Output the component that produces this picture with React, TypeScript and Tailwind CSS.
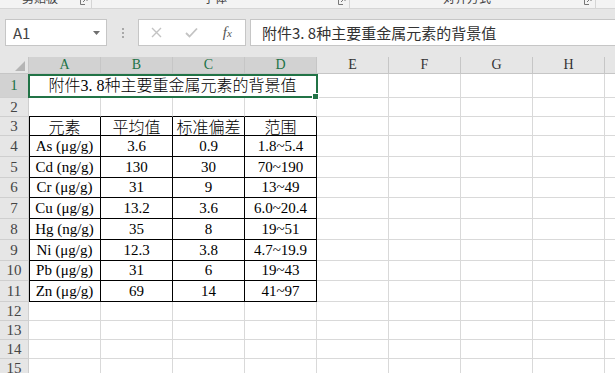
import React from "react";

const COLS = "grid grid-cols-[29px_repeat(8,72px)_1fr]";
const SERIF = "font-['Liberation_Serif','Noto_Sans_CJK_SC',serif]";
const CJK = "font-['Noto_Sans_CJK_SC','Noto_Sans',sans-serif]";

const table: string[][] = [
  ["元素", "平均值", "标准偏差", "范围"],
  ["As (μg/g)", "3.6", "0.9", "1.8~5.4"],
  ["Cd (ng/g)", "130", "30", "70~190"],
  ["Cr (μg/g)", "31", "9", "13~49"],
  ["Cu (μg/g)", "13.2", "3.6", "6.0~20.4"],
  ["Hg (ng/g)", "35", "8", "19~51"],
  ["Ni (μg/g)", "12.3", "3.8", "4.7~19.9"],
  ["Pb (μg/g)", "31", "6", "19~43"],
  ["Zn (μg/g)", "69", "14", "41~97"],
];

const tableHeights = [
  "h-[19px]",
  "h-[21px]",
  "h-[21px]",
  "h-[20px]",
  "h-[21px]",
  "h-[21px]",
  "h-[21px]",
  "h-[20px]",
  "h-[21px]",
];

function RowHead({ n, sel }: { n: number; sel?: boolean }) {
  return (
    <div
      className={`flex items-center justify-center border-r border-b border-[#cfcfcf] text-[15px] leading-none ${SERIF} ${
        sel ? "bg-[#d2d2d2] text-[#217346]" : "bg-[#e6e6e6] text-[#444]"
      }`}
    >
      {n}
    </div>
  );
}

function EmptyTail() {
  return (
    <>
      <div className="border-r border-b border-[#d9d9d9]" />
      <div className="border-r border-b border-[#d9d9d9]" />
      <div className="border-r border-b border-[#d9d9d9]" />
      <div className="border-r border-b border-[#d9d9d9]" />
      <div className="border-b border-[#d9d9d9]" />
    </>
  );
}

function Launcher() {
  return (
    <svg width="8" height="8" viewBox="0 0 8 8" className="-mt-[3px] shrink-0">
      <path d="M0.5 3V7.5H5" fill="none" stroke="#777" strokeWidth="1" />
      <path d="M3 5L7 1M4 1H7V4" fill="none" stroke="#777" strokeWidth="1" />
    </svg>
  );
}

function RibbonGroup({ w, label }: { w: string; label: string }) {
  return (
    <div className={`${w} h-full flex items-start border-r border-[#d5d5d5] pr-[3px] overflow-hidden`}>
      <div className={`flex-1 text-center text-[12px] leading-[12px] text-[#444] -mt-[8px] ${CJK}`}>{label}</div>
      <Launcher />
    </div>
  );
}

export default function App() {
  return (
    <div className="w-[615px] h-[373px] overflow-hidden bg-white flex flex-col">
      {/* ribbon strip */}
      <div className="h-[9px] shrink-0 bg-[#f3f3f3] border-b border-[#d5d5d5] flex overflow-hidden">
        <RibbonGroup w="w-[92px]" label="剪贴板" />
        <RibbonGroup w="w-[258px]" label="字体" />
        <RibbonGroup w="w-[246px]" label="对齐方式" />
      </div>

      {/* formula bar */}
      <div className="h-[48px] shrink-0 bg-[#e6e6e6] flex items-start pt-[10px] pl-[5px]">
        <div className="w-[102px] h-[27px] bg-white border border-[#c6c6c6] flex items-center justify-between pl-[7px] pr-[6px]">
          <span className={`text-[15px] leading-none text-[#444] ${CJK}`}>A1</span>
          <svg width="7" height="4" viewBox="0 0 7 4">
            <path d="M0 0H7L3.5 4Z" fill="#6f6f6f" />
          </svg>
        </div>
        <div className="w-[31px] h-[27px] flex flex-col items-center justify-center gap-[2px]">
          <div className="w-[2px] h-[2px] bg-[#a8a8a8]" />
          <div className="w-[2px] h-[2px] bg-[#a8a8a8]" />
          <div className="w-[2px] h-[2px] bg-[#a8a8a8]" />
        </div>
        <div className="w-[108px] h-[27px] bg-white border border-[#c6c6c6] flex items-center">
          <div className="w-[36px] flex justify-center">
            <svg width="11" height="11" viewBox="0 0 11 11">
              <path d="M1 1L10 10M10 1L1 10" stroke="#c3c3c3" strokeWidth="1.4" />
            </svg>
          </div>
          <div className="w-[36px] flex justify-center">
            <svg width="13" height="11" viewBox="0 0 13 11">
              <path d="M1 6L4.5 9.5L12 1.5" fill="none" stroke="#c3c3c3" strokeWidth="1.8" />
            </svg>
          </div>
          <div className="w-[36px] flex justify-center">
            <span className="italic font-['Liberation_Serif',serif] text-[15px] leading-none text-[#555]">
              f<span className="text-[11px]">x</span>
            </span>
          </div>
        </div>
        <div className="ml-[4px] flex-1 h-[27px] bg-white border border-r-0 border-[#c6c6c6] flex items-center pl-[11px]">
          <span className={`text-[15px] leading-none text-[#333] ${CJK}`}>附件3. 8种主要重金属元素的背景值</span>
        </div>
      </div>

      {/* sheet */}
      <div className="relative flex-1 overflow-hidden">
        {/* column headers */}
        <div className={`${COLS} h-[17px]`}>
          <div className="relative bg-[#e6e6e6] border-r border-b border-[#c6c6c6]">
            <svg width="10" height="10" viewBox="0 0 10 10" className="absolute right-[3px] bottom-[2px]">
              <path d="M10 0V10H0Z" fill="#b5b5b5" />
            </svg>
          </div>
          {["A", "B", "C", "D"].map((c) => (
            <div
              key={c}
              className={`flex items-center justify-center bg-[#d2d2d2] text-[#217346] border-r border-b border-[#c6c6c6] text-[14px] leading-none ${SERIF}`}
            >
              {c}
            </div>
          ))}
          {["E", "F", "G", "H"].map((c) => (
            <div
              key={c}
              className={`flex items-center justify-center bg-[#e6e6e6] text-[#333] border-r border-b border-[#c6c6c6] text-[14px] leading-none ${SERIF}`}
            >
              {c}
            </div>
          ))}
          <div className="bg-[#e6e6e6] border-b border-[#c6c6c6]" />
        </div>

        {/* row 1 */}
        <div className={`${COLS} h-[24px]`}>
          <RowHead n={1} sel />
          <div
            className={`col-span-4 flex items-center justify-center border-r border-b border-[#d9d9d9] text-[16px] leading-none font-light text-black ${SERIF}`}
          >
            附件3. 8种主要重金属元素的背景值
          </div>
          <EmptyTail />
        </div>

        {/* row 2 */}
        <div className={`${COLS} h-[19px]`}>
          <RowHead n={2} />
          <div className="border-r border-b border-[#d9d9d9] border-b-black" />
          <div className="border-r border-b border-[#d9d9d9] border-b-black" />
          <div className="border-r border-b border-[#d9d9d9] border-b-black" />
          <div className="border-r border-b border-[#d9d9d9] border-b-black" />
          <EmptyTail />
        </div>

        {/* table rows 3-11 */}
        {table.map((row, i) => (
          <div key={i} className={`${COLS} ${tableHeights[i]}`}>
            <RowHead n={i + 3} />
            {row.map((v, j) => (
              <div
                key={j}
                className={`flex items-center justify-center border-r border-b border-black text-black leading-none ${
                  i === 0 ? `text-[16px] font-light ${CJK}` : `text-[15px] ${SERIF}`
                } ${j === 0 ? "shadow-[inset_1px_0_0_#000]" : ""}`}
              >
                {v}
              </div>
            ))}
            <EmptyTail />
          </div>
        ))}

        {/* rows 12-15 */}
        {[12, 13, 14, 15].map((n) => (
          <div key={n} className={`${COLS} h-[19px]`}>
            <RowHead n={n} />
            <div className="border-r border-b border-[#d9d9d9]" />
            <div className="border-r border-b border-[#d9d9d9]" />
            <div className="border-r border-b border-[#d9d9d9]" />
            <div className="border-r border-b border-[#d9d9d9]" />
            <EmptyTail />
          </div>
        ))}

        {/* selection */}
        <div className="absolute left-[28px] top-[17px] w-[290px] h-[24px] border-2 border-[#217346]" />
        <div className="absolute left-[312px] top-[36px] w-[7px] h-[7px] bg-[#217346] border border-white" />
      </div>
    </div>
  );
}
